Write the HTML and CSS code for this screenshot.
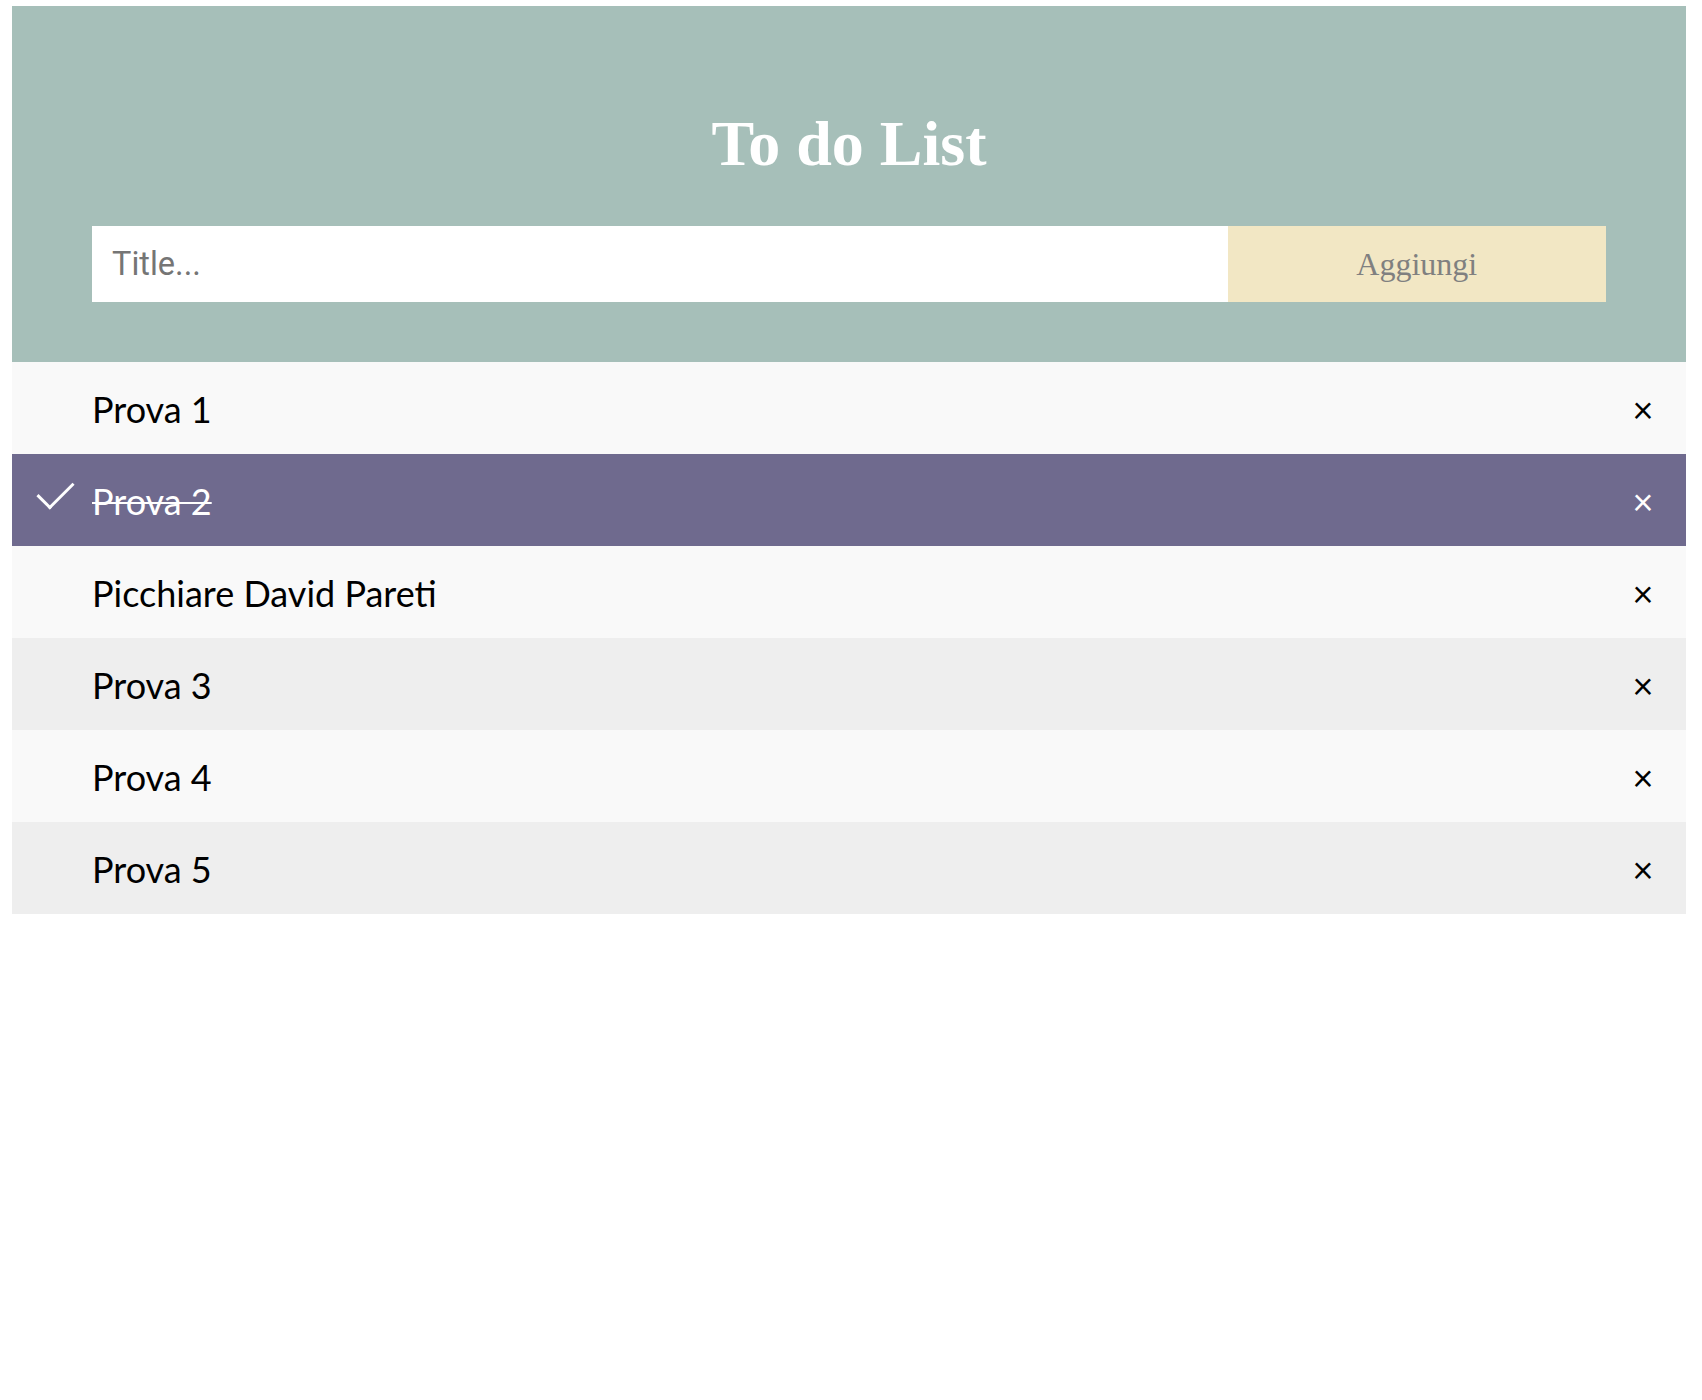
FILE: index.html
```html
<!DOCTYPE html>
<html lang="it">
<head>
<meta charset="utf-8">
<title>To do List</title>
<link rel="stylesheet" href="styles.css">
</head>
<body>
<div class="header">
  <h2 class="title">To do List</h2>
  <div class="add-row">
    <input class="title-input" type="text" placeholder="Title...">
    <span class="add-btn">Aggiungi</span>
  </div>
</div>
<ul class="todo-list">
  <li class="item"><span class="item-text">Prova 1</span><span class="close">×</span></li>
  <li class="item checked"><span class="item-text">Prova 2</span><span class="close">×</span></li>
  <li class="item"><span class="item-text">Picchiare David Pareti</span><span class="close">×</span></li>
  <li class="item"><span class="item-text">Prova 3</span><span class="close">×</span></li>
  <li class="item"><span class="item-text">Prova 4</span><span class="close">×</span></li>
  <li class="item"><span class="item-text">Prova 5</span><span class="close">×</span></li>
</ul>
</body>
</html>
```

FILE: styles.css
```css
* { box-sizing: border-box; }

body {
  margin: 6px 16px 0 12px;
  font-family: Lato, "Noto Sans", sans-serif;
  background: #fff;
}

.header {
  background-color: #a6bfb9;
  padding: 102px 80px 60px;
  text-align: center;
  color: #fff;
}

.title {
  margin: 0 0 46px;
  font-family: "Liberation Serif", "Times New Roman", serif;
  font-weight: bold;
  font-size: 64px;
  line-height: 72px;
}

.add-row {
  display: flex;
  height: 76px;
}

.title-input {
  width: 75%;
  height: 76px;
  border: none;
  margin: 0;
  padding: 0 20px;
  font-family: Roboto, "Liberation Sans", sans-serif;
  font-size: 32.5px;
  outline: none;
  background: #fff;
}

.title-input::placeholder {
  color: #757575;
}

.add-btn {
  width: 25%;
  height: 76px;
  background: #f2e7c4;
  color: #808080;
  font-family: "Liberation Serif", "Times New Roman", serif;
  font-size: 32px;
  display: flex;
  align-items: center;
  justify-content: center;
}

.todo-list {
  list-style: none;
  margin: 0;
  padding: 0;
}

.item {
  position: relative;
  display: flex;
  align-items: flex-start;
  height: 92px;
  padding: 27px 0 25px 80px;
  background: #f9f9f9;
  color: #000;
  font-size: 36px;
  line-height: 40px;
}

.item:nth-child(even) {
  background: #eeeeee;
}

.item.checked {
  background: #6f6a8e;
  color: #fff;
}

.item.checked .item-text {
  text-decoration: line-through;
  text-decoration-thickness: 2px;
}

.item.checked::before {
  content: "";
  position: absolute;
  left: 34px;
  top: 19px;
  width: 16px;
  height: 32px;
  border-style: solid;
  border-color: #fff;
  border-width: 0 3.5px 3.5px 0;
  transform: rotate(45deg);
}

.item-text {
  flex: 1;
}

.close {
  width: 86px;
  text-align: center;
}
```
